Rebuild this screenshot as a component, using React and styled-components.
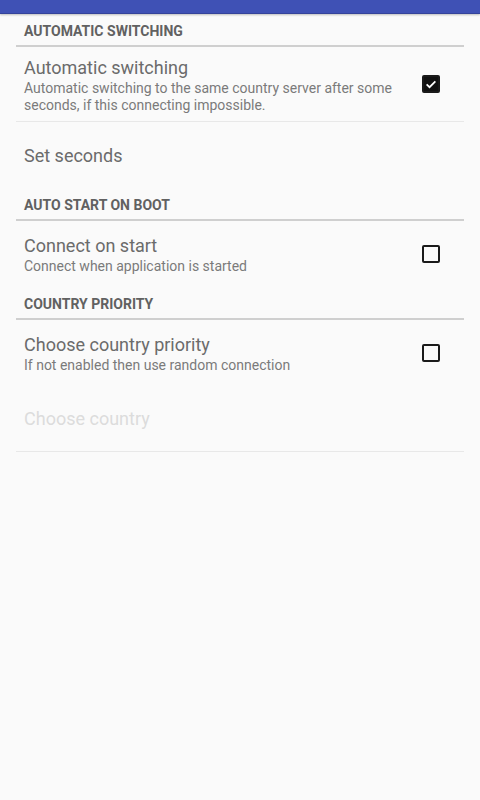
import React from "react";
import styled, { createGlobalStyle } from "styled-components";

const Global = createGlobalStyle`
  html, body { margin: 0; padding: 0; background: #fafafa; }
  body { font-family: Roboto, "Noto Sans", sans-serif; -webkit-font-smoothing: antialiased; }
  * { box-sizing: border-box; }
`;

const Page = styled.div`
  min-height: 800px;
  background: #fafafa;
  display: flex;
  flex-direction: column;
`;

const AppBar = styled.div`
  height: 14px;
  background: #3f51b5;
  box-shadow: 0 1px 2px rgba(0, 0, 0, 0.25);
  border-bottom: 1px solid #34439a;
`;

const List = styled.div`
  margin: 0 16px;
  display: flex;
  flex-direction: column;
`;

const Category = styled.div`
  padding: 7px 8px 4px;
  font-size: 14px;
  line-height: 20px;
  font-weight: 700;
  color: #616161;
  text-transform: uppercase;
  border-bottom: 2px solid #cfcfcf;
`;

const Item = styled.div`
  min-height: ${(p) => (p.$tall ? 75 : 66)}px;
  padding: 0 24px 0 8px;
  display: flex;
  align-items: center;
  border-bottom: ${(p) => (p.$divider ? "1px solid #e8e8e8" : "none")};
`;

const Texts = styled.div`
  flex: 1;
  display: flex;
  flex-direction: column;
  padding-right: 30px;
`;

const Title = styled.div`
  font-size: 18px;
  line-height: 25px;
  color: ${(p) => (p.$disabled ? "#dcdcdc" : "#6b6b6b")};
`;

const Summary = styled.div`
  font-size: 14px;
  line-height: 17px;
  color: #7a7a7a;
`;

const Box = styled.div`
  width: 18px;
  height: 18px;
  border-radius: 2px;
  flex: none;
  display: flex;
  align-items: center;
  justify-content: center;
  background: ${(p) => (p.$checked ? "#111" : "transparent")};
  border: 2px solid #1a1a1a;
`;

const Check = ({ checked }) => (
  <Box $checked={checked}>
    {checked && (
      <svg width="14" height="14" viewBox="0 0 24 24">
        <path d="M4.5 12.5l5 5 10-10" fill="none" stroke="#fff" strokeWidth="3" />
      </svg>
    )}
  </Box>
);

export default function App() {
  return (
    <Page>
      <Global />
      <AppBar />
      <List>
        <Category>Automatic switching</Category>
        <Item $tall $divider>
          <Texts>
            <Title>Automatic switching</Title>
            <Summary>
              Automatic switching to the same country server after some seconds, if this connecting impossible.
            </Summary>
          </Texts>
          <Check checked />
        </Item>
        <Item>
          <Texts>
            <Title>Set seconds</Title>
          </Texts>
        </Item>
        <Category>Auto start on boot</Category>
        <Item>
          <Texts>
            <Title>Connect on start</Title>
            <Summary>Connect when application is started</Summary>
          </Texts>
          <Check />
        </Item>
        <Category>Country priority</Category>
        <Item>
          <Texts>
            <Title>Choose country priority</Title>
            <Summary>If not enabled then use random connection</Summary>
          </Texts>
          <Check />
        </Item>
        <Item $divider>
          <Texts>
            <Title $disabled>Choose country</Title>
          </Texts>
        </Item>
      </List>
    </Page>
  );
}
